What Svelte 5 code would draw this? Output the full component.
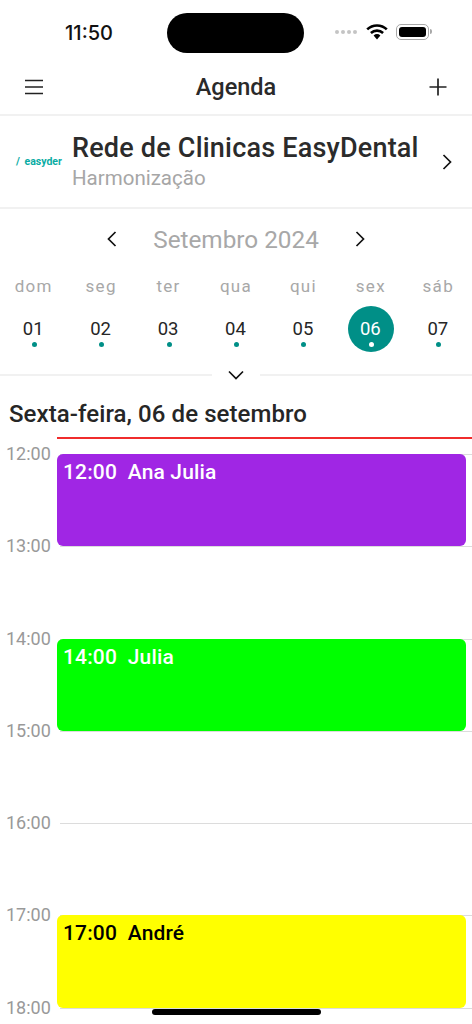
<script lang="ts">
  const days = [
    { name: "dom", num: "01" },
    { name: "seg", num: "02" },
    { name: "ter", num: "03" },
    { name: "qua", num: "04" },
    { name: "qui", num: "05" },
    { name: "sex", num: "06", active: true },
    { name: "sáb", num: "07" },
  ];

  const hours = [
    { time: "12:00", event: "Ana Julia", color: "purple" },
    { time: "13:00" },
    { time: "14:00", event: "Julia", color: "green" },
    { time: "15:00" },
    { time: "16:00" },
    { time: "17:00", event: "André", color: "yellow" },
    { time: "18:00" },
  ];
</script>

<div class="screen">
  <div class="status">
    <span class="clock">11:50</span>
    <div class="island"></div>
    <div class="status-icons">
      <span class="signal"><i></i><i></i><i></i><i></i></span>
      <svg class="wifi" width="22" height="16" viewBox="0 0 22 16" aria-hidden="true">
        <path d="M1.2 5.4a14.2 14.2 0 0 1 19.6 0" fill="none" stroke="#000" stroke-width="2.6" />
        <path d="M4.9 9a9 9 0 0 1 12.2 0" fill="none" stroke="#000" stroke-width="2.6" />
        <path d="M7.6 11.4a4.9 4.9 0 0 1 6.8 0L11 15.4z" fill="#000" />
      </svg>
      <span class="battery"><span class="level"></span></span>
    </div>
  </div>

  <header class="nav">
    <svg width="18" height="16" viewBox="0 0 18 16" aria-hidden="true">
      <path d="M0 1.5h18M0 8h18M0 14.5h18" stroke="#222" stroke-width="1.6" />
    </svg>
    <h1>Agenda</h1>
    <svg width="18" height="18" viewBox="0 0 18 18" aria-hidden="true">
      <path d="M9 0.5v17M0.5 9h17" stroke="#222" stroke-width="1.7" />
    </svg>
  </header>

  <section class="clinic">
    <div class="logo">/ easyder</div>
    <div class="clinic-text">
      <div class="clinic-name">Rede de Clinicas EasyDental</div>
      <div class="clinic-sub">Harmonização</div>
    </div>
    <svg class="clinic-go" width="10" height="16" viewBox="0 0 10 16" aria-hidden="true">
      <path d="M1.5 1l7 7-7 7" fill="none" stroke="#111" stroke-width="1.7" />
    </svg>
  </section>

  <section class="calendar">
    <div class="month">
      <svg width="10" height="16" viewBox="0 0 10 16" aria-hidden="true">
        <path d="M8.5 1l-7 7 7 7" fill="none" stroke="#111" stroke-width="1.7" />
      </svg>
      <span>Setembro 2024</span>
      <svg width="10" height="16" viewBox="0 0 10 16" aria-hidden="true">
        <path d="M1.5 1l7 7-7 7" fill="none" stroke="#111" stroke-width="1.7" />
      </svg>
    </div>
    <div class="week">
      {#each days as d}
        <div class="day">
          <span class="day-name">{d.name}</span>
          <span class="day-num" class:active={d.active}>
            {d.num}
            <i class="dot"></i>
          </span>
        </div>
      {/each}
    </div>
    <div class="collapse">
      <svg width="16" height="10" viewBox="0 0 16 10" aria-hidden="true">
        <path d="M1 1.5l7 7 7-7" fill="none" stroke="#111" stroke-width="1.7" />
      </svg>
    </div>
  </section>

  <h2 class="date">Sexta-feira, 06 de setembro</h2>
  <div class="now"></div>

  <div class="timeline">
    {#each hours as h}
      <div class="hour">
        <span class="hour-label">{h.time}</span>
        <div class="slot">
          {#if h.event}
            <div class="event {h.color}">{h.time}&nbsp; {h.event}</div>
          {/if}
        </div>
      </div>
    {/each}
  </div>

  <div class="home"></div>
</div>

<style>
  :global(body) {
    background: #fff;
  }

  .screen {
    position: relative;
    width: 472px;
    height: 1024px;
    overflow: hidden;
    background: #fff;
    color: #262626;
    font-family: Roboto, "Liberation Sans", sans-serif;
  }

  .status {
    height: 66px;
    display: grid;
    grid-template-columns: 167px 137px 168px;
    padding-top: 13px;
    box-sizing: border-box;
  }

  .clock {
    font-family: Inter, sans-serif;
    font-size: 20px;
    font-weight: 500;
    color: #111;
    line-height: 40px;
    text-align: right;
    padding-right: 54px;
  }

  .island {
    height: 40px;
    border-radius: 20px;
    background: #000;
  }

  .status-icons {
    display: flex;
    align-items: center;
    height: 38px;
    padding-left: 31px;
  }

  .signal {
    display: flex;
    gap: 2px;
    margin-right: 9px;
  }

  .signal i {
    width: 4px;
    height: 4px;
    border-radius: 50%;
    background: #c4c4c4;
  }

  .wifi {
    margin-right: 8px;
  }

  .battery {
    position: relative;
    box-sizing: border-box;
    width: 33px;
    height: 16px;
    padding: 2px;
    border: 1.5px solid #a8a8a8;
    border-radius: 5px;
  }

  .battery::after {
    content: "";
    position: absolute;
    right: -4px;
    top: 3.5px;
    width: 2px;
    height: 5px;
    border-radius: 0 2px 2px 0;
    background: #a8a8a8;
  }

  .level {
    display: block;
    height: 100%;
    border-radius: 3px;
    background: #000;
  }

  .nav {
    height: 42px;
    padding: 0 25px 6px;
    display: flex;
    align-items: center;
    justify-content: space-between;
    border-bottom: 2px solid #f1f1f1;
  }

  .nav h1 {
    margin: 0;
    font-size: 23.5px;
    font-weight: 500;
    color: #2a2a2a;
  }

  .clinic {
    height: 91px;
    display: flex;
    align-items: center;
    border-bottom: 2px solid #f1f1f1;
  }

  .logo {
    width: 44px;
    margin-left: 16px;
    margin-right: 12px;
    white-space: nowrap;
    font-size: 10.5px;
    font-weight: 700;
    word-spacing: 2px;
    color: #09aca4;
  }

  .clinic-text {
    flex: 1;
    min-width: 0;
  }

  .clinic-name {
    font-size: 27px;
    font-weight: 500;
    line-height: 32px;
    letter-spacing: 0.2px;
    color: #2b2b2b;
    white-space: nowrap;
  }

  .clinic-sub {
    margin-top: 2.5px;
    font-size: 20.5px;
    line-height: 25px;
    color: #a6a6a6;
  }

  .clinic-go {
    margin-right: 20px;
    margin-top: 1px;
  }

  .calendar {
    position: relative;
    height: 165px;
    border-bottom: 2px solid #f1f1f1;
  }

  .month {
    display: flex;
    align-items: center;
    justify-content: center;
    gap: 36px;
    padding-top: 15px;
    height: 30px;
    font-size: 24.3px;
    color: #a8a8a8;
  }

  .week {
    display: grid;
    grid-template-columns: repeat(7, 1fr);
    margin-top: 22px;
  }

  .day {
    display: flex;
    flex-direction: column;
    align-items: center;
    gap: 10px;
  }

  .day-name {
    font-size: 17px;
    line-height: 20px;
    letter-spacing: 1.3px;
    color: #a8a8a8;
  }

  .day-num {
    position: relative;
    width: 46px;
    height: 46px;
    line-height: 46px;
    border-radius: 50%;
    text-align: center;
    text-indent: -1px;
    font-size: 18.5px;
    color: #262626;
  }

  .day-num.active {
    background: #008f87;
    color: #fff;
  }

  .dot {
    position: absolute;
    left: 21px;
    bottom: 5.5px;
    width: 5px;
    height: 5px;
    border-radius: 50%;
    background: #008f87;
  }

  .active .dot {
    background: #fff;
  }

  .collapse {
    position: absolute;
    left: 212px;
    bottom: -13px;
    width: 48px;
    height: 24px;
    display: flex;
    align-items: center;
    justify-content: center;
    background: #fff;
  }

  .date {
    margin: 0;
    padding: 24.5px 9px 0;
    height: 62px;
    box-sizing: border-box;
    font-size: 24px;
    font-weight: 500;
    line-height: 27px;
    letter-spacing: 0.08px;
    color: #262626;
  }

  .now {
    height: 2px;
    margin-left: 57px;
    margin-top: -1px;
    background: #f02c2c;
  }

  .timeline {
    margin-top: 15px;
  }

  .hour {
    display: grid;
    grid-template-columns: 57px 1fr;
    height: 92.25px;
  }

  .hour-label {
    margin-top: -11px;
    height: 22px;
    line-height: 22px;
    padding-left: 6px;
    font-size: 18px;
    color: #999;
  }

  .slot {
    border-top: 1px solid #dcdcdc;
    margin-left: 3px;
    position: relative;
  }

  .event {
    position: absolute;
    top: -1px;
    left: -3px;
    right: 6px;
    height: 92.25px;
    box-sizing: border-box;
    padding: 5px 6px;
    border-radius: 6px;
    font-size: 21px;
    font-weight: 500;
    line-height: 26px;
    letter-spacing: 0.15px;
  }

  .purple {
    background: #a026e4;
    color: #fff;
  }

  .green {
    background: #00ff00;
    color: #fff;
  }

  .yellow {
    background: #ffff00;
    color: #000;
  }

  .home {
    position: absolute;
    left: 152px;
    bottom: 9px;
    width: 169px;
    height: 6px;
    border-radius: 3px;
    background: #000;
  }
</style>
